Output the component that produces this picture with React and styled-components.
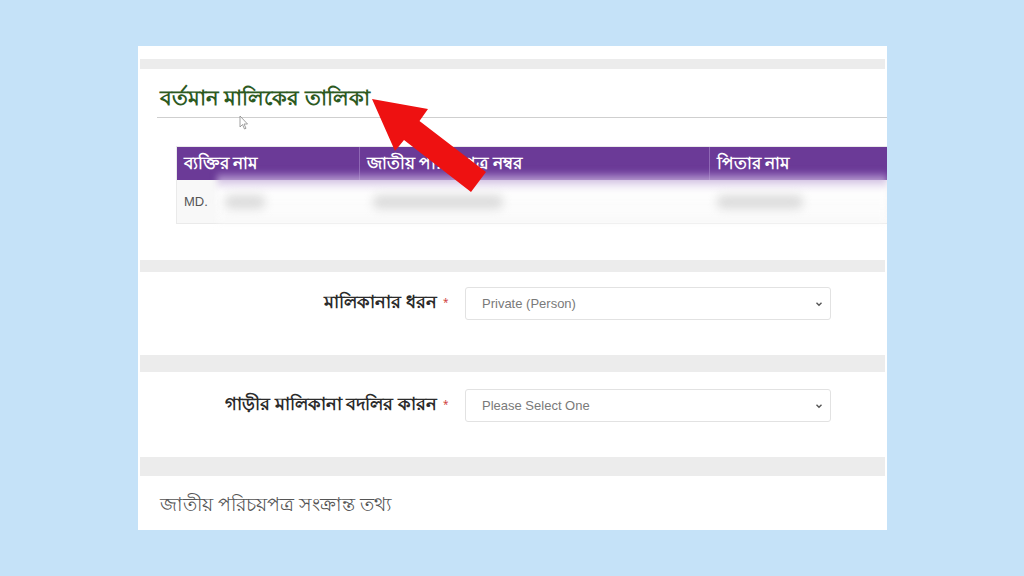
import React from "react";
import styled, { createGlobalStyle } from "styled-components";

const GlobalStyle = createGlobalStyle`
  html, body {
    margin: 0;
    padding: 0;
    background: #c5e2f8;
  }
  body {
    font-family: "Noto Sans", "Liberation Sans", sans-serif;
  }
`;

const Page = styled.div`
  position: relative;
  width: 1024px;
  height: 576px;
  overflow: hidden;
  padding-top: 46px;
  box-sizing: border-box;
`;

const Panel = styled.div`
  margin-left: 138px;
  width: 749px;
  height: 484px;
  background: #ffffff;
  display: flex;
  flex-direction: column;
  overflow: hidden;
`;

const Band = styled.div`
  height: ${(p) => p.h}px;
  margin: 0 2px;
  background: #ececec;
  flex-shrink: 0;
`;

const Section = styled.div`
  height: ${(p) => p.h}px;
  flex-shrink: 0;
  box-sizing: border-box;
  padding-top: ${(p) => p.pt || 0}px;
`;

const Heading = styled.div`
  margin-left: 19px;
  padding: 0 0 8px 3px;
  border-bottom: 1px solid #cfcfcf;
  font-size: 21px;
  line-height: 24px;
  font-weight: 700;
  color: #2d5a1f;
`;

const Table = styled.div`
  margin: 28px 0 0 38px;
  border: 1px solid #eaeaea;
  border-right: none;
  position: relative;
`;

const HeadRow = styled.div`
  display: grid;
  grid-template-columns: 182px 350px 1fr;
  height: 33px;
  background: #6b3a97;
`;

const HeadCell = styled.div`
  display: flex;
  align-items: center;
  padding-left: 7px;
  color: #ffffff;
  font-size: 17px;
  font-weight: 700;
  border-left: ${(p) => (p.first ? "none" : "1px solid #8f68b5")};
`;

const BodyRow = styled.div`
  display: grid;
  grid-template-columns: 182px 350px 1fr;
  height: 43px;
  background: #f8f8f8;
`;

const BodyCell = styled.div`
  display: flex;
  align-items: center;
  padding-left: 7px;
  color: #555;
  font-family: "Liberation Sans", Arial, sans-serif;
  font-size: 13px;
`;

const Redact = styled.div`
  position: absolute;
  left: 40px;
  right: 0;
  top: 26px;
  bottom: 0;
  background: linear-gradient(
    to bottom,
    rgba(150, 110, 190, 0.6) 0%,
    rgba(255, 255, 255, 0.85) 35%,
    rgba(250, 250, 250, 0.9) 100%
  );
  filter: blur(3px);
`;

const Smudge = styled.div`
  position: absolute;
  top: ${(p) => p.top}px;
  left: ${(p) => p.left}px;
  width: ${(p) => p.w}px;
  height: 14px;
  background: #dcdcdc;
  filter: blur(5px);
  border-radius: 6px;
`;

const FormRow = styled.div`
  display: grid;
  grid-template-columns: 299px 10px 366px;
  align-items: center;
  column-gap: 9px;
`;

const Label = styled.div`
  text-align: right;
  font-size: 17.5px;
  font-weight: 700;
  color: #2b2b2b;
`;

const Star = styled.span`
  color: #d0453f;
  font-size: 10px;
  line-height: 1;
  margin-left: -3px;
  margin-top: -4px;
`;

const Select = styled.div`
  height: 33px;
  box-sizing: border-box;
  border: 1px solid #e2e2e2;
  border-radius: 3px;
  display: flex;
  align-items: center;
  justify-content: space-between;
  padding: 0 6px 0 16px;
  color: #7a7a7a;
  font-family: "Liberation Sans", Arial, sans-serif;
  font-size: 13px;
`;

const SubHeading = styled.div`
  padding-left: 22px;
  font-size: 19px;
  line-height: 24px;
  color: #555;
`;

const Overlay = styled.svg`
  position: absolute;
  left: 0;
  top: 0;
  width: 1024px;
  height: 576px;
  pointer-events: none;
`;

function Chevron() {
  return (
    <svg width="10" height="10" viewBox="0 0 10 10">
      <path d="M2.5 3.8 L5 6.3 L7.5 3.8" fill="none" stroke="#555" strokeWidth="1.4" />
    </svg>
  );
}

function Field({ label, value }) {
  return (
    <FormRow>
      <Label>{label}</Label>
      <Star>*</Star>
      <Select>
        <span>{value}</span>
        <Chevron />
      </Select>
    </FormRow>
  );
}

export default function App() {
  return (
    <Page>
      <GlobalStyle />
      <Panel>
        <Section h={13} />
        <Band h={10} />
        <Section h={191} pt={16}>
          <Heading>বর্তমান মালিকের তালিকা</Heading>
          <Table>
            <HeadRow>
              <HeadCell first>ব্যক্তির নাম</HeadCell>
              <HeadCell>জাতীয় পরিচয়পত্র নম্বর</HeadCell>
              <HeadCell>পিতার নাম</HeadCell>
            </HeadRow>
            <BodyRow>
              <BodyCell>MD.</BodyCell>
              <BodyCell />
              <BodyCell />
            </BodyRow>
            <Redact />
            <Smudge top={48} left={48} w={40} />
            <Smudge top={48} left={196} w={130} />
            <Smudge top={48} left={540} w={86} />
          </Table>
        </Section>
        <Band h={12} />
        <Section h={83} pt={15}>
          <Field label="মালিকানার ধরন" value="Private (Person)" />
        </Section>
        <Band h={17} />
        <Section h={85} pt={17}>
          <Field label="গাড়ীর মালিকানা বদলির কারন" value="Please Select One" />
        </Section>
        <Band h={19} />
        <Section h={54} pt={16}>
          <SubHeading>জাতীয় পরিচয়পত্র সংক্রান্ত তথ্য</SubHeading>
        </Section>
      </Panel>
      <Overlay viewBox="0 0 1024 576">
        <path
          d="M240 116 L240 127 L242.5 124.5 L244.5 129 L246 128.3 L244 124 L247.5 124 Z"
          fill="#fff"
          stroke="#888"
          strokeWidth="0.8"
        />
        <polygon
          points="372,99 428,109 419.5,121 486,172 471,192 404,140 395,151"
          fill="#ee1111"
        />
      </Overlay>
    </Page>
  );
}
